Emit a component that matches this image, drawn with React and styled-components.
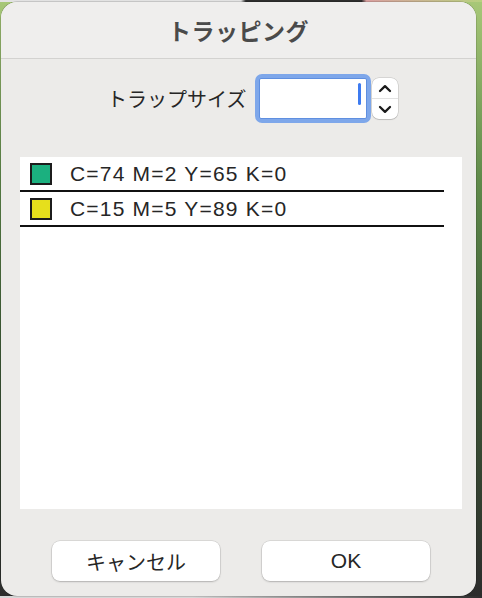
import React from "react";
import styled, { createGlobalStyle } from "styled-components";

const Global = createGlobalStyle`
  html, body { margin: 0; padding: 0; }
  body {
    width: 482px;
    height: 598px;
    overflow: hidden;
    background: linear-gradient(to bottom, #a8c878 0%, #5f8a4a 30%, #3d5a36 60%, #2c2c2c 100%);
    font-family: "Noto Sans CJK JP", "Liberation Sans", sans-serif;
  }
`;

const Desktop = styled.div`
  position: relative;
  width: 482px;
  height: 598px;
  box-sizing: border-box;
  padding: 2px 6px 2px 1px;
  background:
    linear-gradient(to right, #e2e2e2 0%, #e2e2e2 50%, #2e2e2e 51%, #2e2e2e 75%, #d9a0a0 76%, #b8d080 100%) top / 100% 2px no-repeat,
    linear-gradient(to right, #d6d6d6 0%, #d6d6d6 40%, #2e2e2e 100%) bottom / 100% 2px no-repeat;
`;

const Window = styled.div`
  width: 475px;
  height: 594px;
  box-sizing: border-box;
  background: #ecebe9;
  border-radius: 16px;
  box-shadow: 0 0 0 0.5px rgba(0, 0, 0, 0.25);
  display: flex;
  flex-direction: column;
  overflow: hidden;
`;

const TitleBar = styled.div`
  height: 56px;
  flex: none;
  display: flex;
  align-items: center;
  justify-content: center;
  background: #efeeed;
  border-bottom: 1px solid #d3d2d0;
  font-size: 23px;
  font-weight: 700;
  color: #4a4a4a;
  letter-spacing: 0.5px;
`;

const SizeRow = styled.div`
  display: flex;
  align-items: center;
  margin-top: 15px;
  padding-left: 106px;
  height: 49px;
`;

const Label = styled.span`
  font-size: 20px;
  color: #262626;
  margin-right: 9px;
`;

const FieldRing = styled.div`
  width: 116px;
  height: 49px;
  box-sizing: border-box;
  border: 4px solid #7ea7ea;
  border-radius: 7px;
  background: #7ea7ea;
  display: flex;
`;

const FieldInner = styled.div`
  flex: 1;
  background: #ffffff;
  border: 1px solid #5f8fe0;
  border-radius: 2px;
  display: flex;
  justify-content: flex-end;
  align-items: center;
  padding-right: 5px;
`;

const Caret = styled.div`
  width: 3px;
  height: 22px;
  border-radius: 2px;
  background: #3d7bf0;
  margin-top: -10px;
`;

const Stepper = styled.div`
  width: 26px;
  height: 41px;
  margin-left: 1px;
  box-sizing: border-box;
  background: #ffffff;
  border-radius: 7px;
  box-shadow: 0 0 0 0.5px rgba(0, 0, 0, 0.18), 0 1px 1px rgba(0, 0, 0, 0.12);
  display: flex;
  flex-direction: column;
`;

const StepHalf = styled.div`
  flex: 1;
  display: flex;
  align-items: center;
  justify-content: center;
  border-top: ${(p) => (p.$bottom ? "1px solid #e2e2e2" : "none")};
`;

const List = styled.div`
  margin: 34px 14px 0 19px;
  height: 352px;
  background: #ffffff;
  flex: none;
`;

const Row = styled.div`
  width: 424px;
  height: 33px;
  display: flex;
  align-items: center;
  border-bottom: 2px solid #111111;
  box-sizing: content-box;
`;

const Swatch = styled.div`
  width: 22px;
  height: 22px;
  box-sizing: border-box;
  border: 2px solid #1c1c1c;
  background: ${(p) => p.$color};
  margin-left: 10px;
  margin-right: 18px;
`;

const RowText = styled.span`
  font-family: "Liberation Sans", Arial, sans-serif;
  font-size: 21px;
  letter-spacing: 1.2px;
  color: #262626;
`;

const Buttons = styled.div`
  display: flex;
  gap: 42px;
  padding-left: 51px;
  margin-top: 32px;
`;

const Button = styled.div`
  width: 168px;
  height: 40px;
  box-sizing: border-box;
  border-radius: 8px;
  background: #ffffff;
  box-shadow: 0 0 0 0.5px rgba(0, 0, 0, 0.15), 0 1px 2px rgba(0, 0, 0, 0.18);
  display: flex;
  align-items: center;
  justify-content: center;
  color: #262626;
  font-size: ${(p) => (p.$latin ? "21px" : "20px")};
  font-family: ${(p) => (p.$latin ? '"Liberation Sans", Arial, sans-serif' : '"Noto Sans CJK JP", sans-serif')};
`;

const Chevron = ({ up }) => (
  <svg width="14" height="9" viewBox="0 0 14 9">
    <path
      d={up ? "M2 7 L7 2.2 L12 7" : "M2 2 L7 6.8 L12 2"}
      fill="none"
      stroke="#1a1a1a"
      strokeWidth="2.3"
      strokeLinecap="round"
      strokeLinejoin="round"
    />
  </svg>
);

const inks = [
  { color: "#1bb07f", label: "C=74 M=2 Y=65 K=0" },
  { color: "#e6df1c", label: "C=15 M=5 Y=89 K=0" },
];

export default function App() {
  return (
    <>
      <Global />
      <Desktop>
        <Window>
          <TitleBar>トラッピング</TitleBar>
          <SizeRow>
            <Label>トラップサイズ</Label>
            <FieldRing>
              <FieldInner>
                <Caret />
              </FieldInner>
            </FieldRing>
            <Stepper>
              <StepHalf>
                <Chevron up />
              </StepHalf>
              <StepHalf $bottom>
                <Chevron />
              </StepHalf>
            </Stepper>
          </SizeRow>
          <List>
            {inks.map((ink) => (
              <Row key={ink.label}>
                <Swatch $color={ink.color} />
                <RowText>{ink.label}</RowText>
              </Row>
            ))}
          </List>
          <Buttons>
            <Button>キャンセル</Button>
            <Button $latin>OK</Button>
          </Buttons>
        </Window>
      </Desktop>
    </>
  );
}
